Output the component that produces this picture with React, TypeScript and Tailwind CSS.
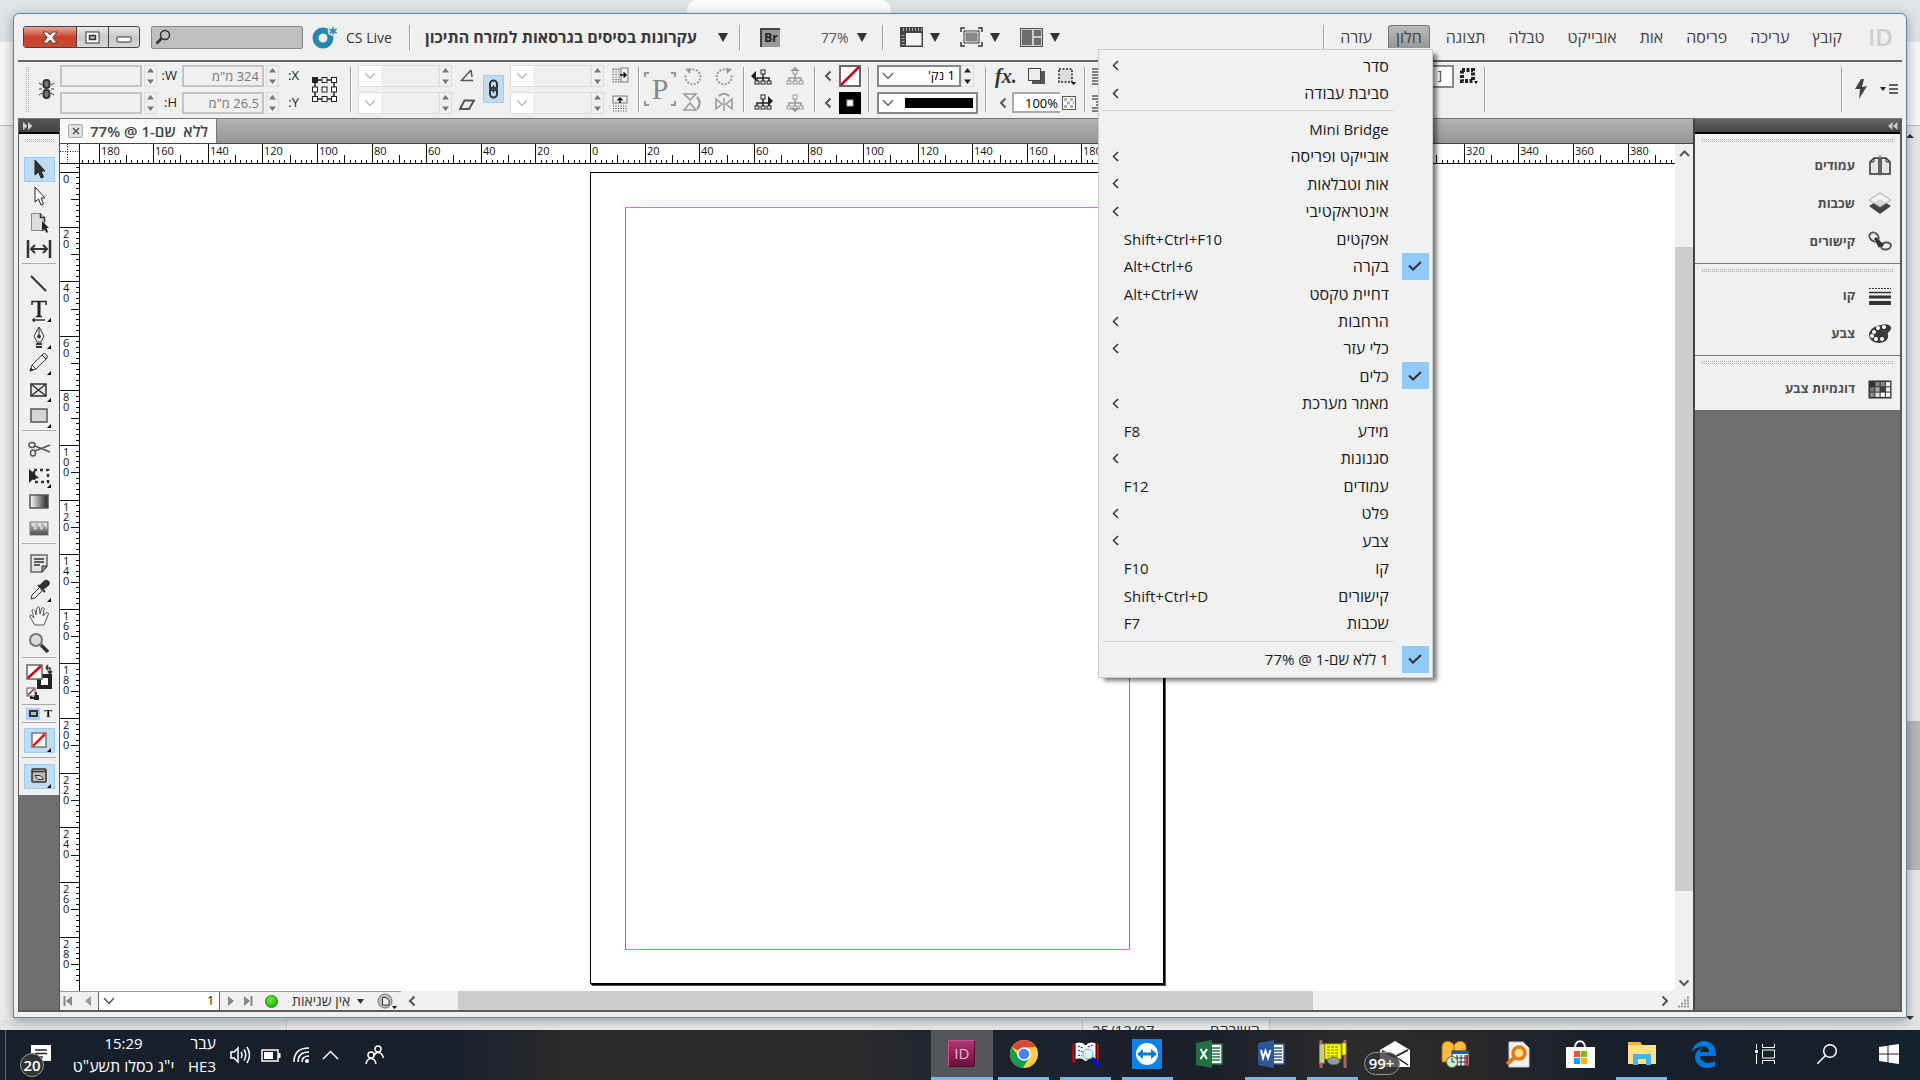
import React from "react";

type Kids = { children?: React.ReactNode };

const Svg = ({ w = 20, h = 20, children }: Kids & { w?: number; h?: number }) => (
  <svg width={w} height={h} viewBox={`0 0 ${w} ${h}`} fill="none" stroke="#333" className="shrink-0" aria-hidden="true">
    {children}
  </svg>
);

const Down = ({ c = "#333" }: { c?: string }) => (
  <Svg w={10} h={9}><path d="M0 0H10L5 9Z" fill={c} stroke="none" /></Svg>
);
const Chevron = ({ c = "#555" }: { c?: string }) => (
  <Svg w={8} h={12}><path d="M6.500 1.500L2 6L6.500 10.500" stroke={c} strokeWidth="2" /></Svg>
);
const ChevDown = ({ c = "#bbb" }: { c?: string }) => (
  <Svg w={12} h={8}><path d="M1 1L6 6.500L11 1" stroke={c} strokeWidth="1.500" /></Svg>
);
const Corner = () => <path d="M25 21V25H21Z" fill="#000" stroke="none" />;

const Rule = ({ className = "" }: { className?: string }) => (
  <div className={`w-px h-[45px] bg-[#a0a0a0] border-r border-white box-content shrink-0 ${className}`} />
);

/* ---------- title bar ---------- */

const menus = ["קובץ", "עריכה", "פריסה", "אות", "אובייקט", "טבלה", "תצוגה", "חלון", "עזרה"];

type Row = { t: string; k?: string; on?: boolean; latin?: boolean };
const topRows: Row[] = [{ t: "סדר" }, { t: "סביבת עבודה" }];
const midRows: Row[] = [
  { t: "Mini Bridge", k: " ", latin: true },
  { t: "אובייקט ופריסה" },
  { t: "אות וטבלאות" },
  { t: "אינטראקטיבי" },
  { t: "אפקטים", k: "Shift+Ctrl+F10" },
  { t: "בקרה", k: "Alt+Ctrl+6", on: true },
  { t: "דחיית טקסט", k: "Alt+Ctrl+W" },
  { t: "הרחבות" },
  { t: "כלי עזר" },
  { t: "כלים", k: " ", on: true },
  { t: "מאמר מערכת" },
  { t: "מידע", k: "F8" },
  { t: "סגנונות" },
  { t: "עמודים", k: "F12" },
  { t: "פלט" },
  { t: "צבע" },
  { t: "קו", k: "F10" },
  { t: "קישורים", k: "Shift+Ctrl+D" },
  { t: "שכבות", k: "F7" },
];

const MenuRow = ({ t, k, on, latin }: Row) => (
  <button role="menuitem" className="flex flex-1 w-full items-center pr-[3px] leading-5 text-[#1a1a1a]">
    <span className={`flex h-[27px] w-[27px] items-center justify-center ${on ? "bg-[#91c9f7]" : ""}`}>
      {on && <Svg w={14} h={10}><path d="M1 4.500L5 8.500L13 1" strokeWidth="2" /></Svg>}
    </span>
    <span className={`mr-[13px] ${latin ? "text-[15px]" : "text-[16px]"}`}>{t}</span>
    {k ? (
      <span dir="ltr" className="mr-auto ml-[25px] text-[15px]">{k}</span>
    ) : (
      <span className="mr-auto ml-[13px]"><Svg w={7} h={11}><path d="M6 1L1.500 5.500L6 10" strokeWidth="1.500" /></Svg></span>
    )}
  </button>
);

const WindowMenu = () => (
  <div role="menu" className="absolute right-[-3px] top-full z-20 flex h-[629px] w-[335px] flex-col border border-[#ccc] bg-[#f1f1f1] pt-[2px] pb-1 shadow-[5px_4px_4px_-1px_rgba(0,0,0,0.5)]">
    <div className="flex h-[55px] flex-col">{topRows.map((r) => <MenuRow key={r.t} {...r} />)}</div>
    <hr className="mr-[38px] ml-[3px] mt-[3px] mb-1 border-[#d9d9d9]" />
    <div className="flex h-[522px] flex-col">{midRows.map((r) => <MenuRow key={r.t} {...r} />)}</div>
    <hr className="mr-[38px] ml-[3px] mt-1 mb-[3px] border-[#d9d9d9]" />
    <div className="flex h-[28px] flex-col"><MenuRow t="1 ללא שם-1 @ 77%" k=" " on latin /></div>
  </div>
);

const TitleBar = () => (
  <header className="flex h-[46px] items-center pl-[5px] pr-[10px]">
    <div className="flex h-[22px] overflow-hidden rounded-[3px] border border-[#444] bg-gradient-to-b from-[#e8e8e8] via-[#c9c9c9] to-[#d8d8d8]">
      <button aria-label="סגור" className="flex w-[52px] items-center justify-center bg-gradient-to-b from-[#e5a59b] via-[#c9432f] to-[#c94a33]">
        <Svg w={16} h={13}><path d="M1 1H5.500L8 4L10.500 1H15L10.800 6.500L15 12H10.500L8 9L5.500 12H1L5.200 6.500Z" fill="#fff" stroke="#444" /></Svg>
      </button>
      <button aria-label="הגדל" className="flex w-[32px] items-center justify-center border-l border-[#444]">
        <Svg w={15} h={13}><rect x="1" y="1" width="13" height="11" fill="#fff" /><rect x="4.500" y="4.500" width="6" height="4" fill="#bbb" strokeWidth="1.500" /></Svg>
      </button>
      <button aria-label="מזער" className="flex w-[31px] items-center justify-center border-l border-[#444] pt-1">
        <Svg w={16} h={7}><rect x="1" y="1" width="14" height="5" fill="#fff" rx="1" /></Svg>
      </button>
    </div>
    <label className="ml-[11px] flex h-[23px] w-[152px] items-center rounded-[2px] border border-[#888] bg-[#bfbfbf] pl-[3px]">
      <Svg w={16} h={16}><circle cx="10" cy="6" r="4.500" strokeWidth="1.500" /><path d="M6.500 9.500L1.500 14.500" strokeWidth="2.500" /></Svg>
      <input aria-label="חיפוש" className="min-w-0 flex-1 bg-transparent outline-none" />
    </label>
    <button className="ml-[9px] flex items-center gap-2 text-[#333]">
      <Svg w={26} h={24}>
        <circle cx="11" cy="13" r="7.500" stroke="#2786ae" strokeWidth="6" />
        <path d="M21 1V11M16.500 3.500L25.500 8.500M25.500 3.500L16.500 8.500" stroke="#f0f0f0" strokeWidth="4" />
        <path d="M21 2V10M17.500 4L24.500 8M24.500 4L17.500 8" stroke="#2786ae" strokeWidth="1.500" />
      </Svg>
      <span className="w-[45px] whitespace-nowrap text-[14px]">CS Live</span>
    </button>
    <Rule className="ml-[18px] h-[25px]!" />
    <button className="ml-[14px] flex w-[303px] items-center justify-between whitespace-nowrap">
      <span dir="rtl" className="text-[16px] font-bold text-[#3a3a3a]">עקרונות בסיסים בגרסאות למזרח התיכון</span>
      <Down />
    </button>
    <Rule className="ml-[11px] h-[25px]!" />
    <button aria-label="Bridge" className="ml-[19px] flex h-[19px] w-[20px] items-center justify-center border-t-2 border-l-2 border-[#444] bg-[#999] text-[12px] font-bold leading-none text-[#222]">Br</button>
    <button className="ml-[41px] flex items-center gap-[9px] text-[14px] text-[#555]"><span className="w-[27px]">77%</span><Down /></button>
    <Rule className="ml-[15px] h-[25px]!" />
    <button aria-label="אפשרויות תצוגה" className="ml-4 flex items-center gap-[7px]">
      <Svg w={23} h={20}><rect width="23" height="20" fill="#444" stroke="none" /><rect x="6" y="6" width="15.500" height="12.500" fill="#f4f4f4" stroke="none" /><path d="M3 2.500H22M3 8V20" stroke="#aaa" strokeWidth="3" strokeDasharray="1 2" /></Svg>
      <Down />
    </button>
    <button aria-label="מצב מסך" className="ml-[20px] flex items-center gap-[7px]">
      <Svg w={23} h={20}><path d="M1 5V1H5M18 1H22V5M22 15V19H18M5 19H1V15" strokeWidth="1.500" /><rect x="4" y="4" width="15" height="12" fill="#888" /><path d="M5 5h13v10H5z" stroke="#ddd" /></Svg>
      <Down />
    </button>
    <button aria-label="סידור מסמכים" className="ml-[20px] flex items-center gap-[7px]">
      <Svg w={23} h={19}><rect x=".5" y=".5" width="22" height="18" fill="#ccc" stroke="#555" /><rect x="2" y="2" width="10" height="15" fill="#6c6c6c" stroke="none" /><rect x="14" y="2" width="7" height="6" fill="#6c6c6c" stroke="none" /><rect x="14" y="10" width="7" height="7" fill="#6c6c6c" stroke="none" /></Svg>
      <Down />
    </button>
    <Rule className="ml-auto h-[25px]!" />
    <nav dir="rtl" className="ml-2 flex h-[46px] items-start gap-[9px] pt-[11px]">
      {menus.map((m, i) => (
        <div key={m} className="relative">
          <button className={`h-[23px] rounded-t-[3px] px-[7px] text-[16px] leading-[23px] whitespace-nowrap text-[#444] ${i === 7 ? "border border-b-0 border-[#777] bg-gradient-to-b from-[#bbb] to-[#979797] leading-[22px]" : ""}`}>{m}</button>
          {i === 7 && <WindowMenu />}
        </div>
      ))}
    </nav>
    <span className="ml-[19px] w-[24px] text-[24px] font-semibold leading-none text-[#cfcfcf]">ID</span>
  </header>
);

/* ---------- control bar ---------- */

const Spin = ({ c = "#777" }: { c?: string }) => (
  <button aria-label="שינוי ערך" className="flex h-[22px] w-[13px] shrink-0 items-center justify-center border border-[#ddd]">
    <Svg w={7} h={18}><path d="M0 5.500L3.500 1L7 5.500ZM0 12.500L3.500 17L7 12.500Z" fill={c} stroke="none" /></Svg>
  </button>
);
const Field = ({ v, l }: { v: string; l: string }) => (
  <label dir="rtl" className="flex h-[22px] items-center text-[13px] text-[#222]">
    <span className="ml-[4px] w-[16px] text-right">{l}</span>
    <Spin />
    <input defaultValue={v} className="mr-[2px] h-[22px] w-[82px] border-2 border-[#c4c4c8] px-[3px] text-[13px] text-[#777]" />
  </label>
);
const Combo = ({ l }: { l: string }) => (
  <div className="flex">
    <button aria-label={l} className="flex h-[22px] w-[81px] border border-r-0 border-[#ddd]">
      <span className="flex h-full w-[22px] items-center justify-center bg-white"><ChevDown /></span>
    </button>
    <Spin />
  </div>
);
const Pair = ({ children, className = "" }: Kids & { className?: string }) => (
  <div className={`flex h-[49px] shrink-0 flex-col items-center justify-between ${className}`}>{children}</div>
);
const Rot = ({ flip }: { flip?: boolean }) => (
  <Svg w={19} h={20}>
    <g transform={flip ? "translate(19 0) scale(-1 1)" : ""}>
      <path d="M6 3.500A7.500 7.500 0 1 1 3 7" stroke="#999" strokeWidth="2" strokeDasharray="2 1.500" /><path d="M2 2L8 1L7 7Z" fill="#999" stroke="none" />
    </g>
  </Svg>
);
const Tree = ({ c, a }: { c: string; a: string }) => (
  <Svg w={22} h={20}><path d="M12 7V11M6 14V11H18V14M12 11V14" stroke={c} strokeWidth="1.500" /><rect x="10" y="3" width="4" height="4" stroke={c} /><rect x="4" y="14" width="4" height="3" stroke={c} /><rect x="10" y="14" width="4" height="3" stroke={c} /><rect x="16" y="14" width="4" height="3" stroke={c} /><path d={a} fill={c} stroke="none" /></Svg>
);

const refPoints = [0, 1, 2, 3, 4, 5, 6, 7, 8];

const ControlBar = () => (
  <section aria-label="בקרה" className="flex h-[59px] items-center border-b border-[#777] border-t-2 border-t-[#666] bg-[#f0f0f0] pl-[7px] pr-1 pb-[2px]">
    <Grip className="h-[45px] w-[4px]" />
    <div className="ml-[9px] w-[18px]">
      <Svg w={17} h={20}><path d="M1 4L4 6M1 10H4M1 16L4 14M16 4L13 6M16 10H13M16 16L13 14" /><rect x="5.500" y="1" width="6" height="8" rx="3" fill="#777" strokeWidth="2" /><rect x="5.500" y="11" width="6" height="8" rx="3" fill="#777" strokeWidth="2" /></Svg>
    </div>
    <Pair className="ml-[4px]"><Field l="W:" v="" /><Field l="H:" v="" /></Pair>
    <Pair className="ml-[5px]"><Field l="X:" v={'324 מ"מ'} /><Field l="Y:" v={'26.5 מ"מ'} /></Pair>
    <div className="ml-[13px]">
      <Svg w={25} h={25}>
        <rect x="3" y="3" width="19" height="19" strokeWidth="1.500" stroke="#222" />
        {refPoints.map((i) => <rect key={i} x={(i % 3) * 9.500 + 0.500} y={Math.floor(i / 3) * 9.500 + 0.500} width="5" height="5" stroke="#222" fill={i === 0 ? "#222" : "#fff"} />)}
      </Svg>
    </div>
    <Rule className="ml-[13px]" />
    <Pair className="ml-[6px]"><Combo l="קנה מידה X" /><Combo l="קנה מידה Y" /></Pair>
    <Pair className="ml-[7px] py-[3px]">
      <Svg w={14} h={14}><path d="M11 2L1.500 12.500H13M11 2L12 9" stroke="#555" strokeWidth="1.500" /></Svg>
      <Svg w={16} h={12}><path d="M5.500 1.500H15L10 10H1Z" stroke="#555" strokeWidth="2" /></Svg>
    </Pair>
    <button aria-label="נעל יחס" className="ml-[8px] flex h-[28px] w-[21px] items-center justify-center border border-[#9bcdf5] bg-[#c0dcf2]">
      <Svg w={11} h={20}><rect x="2" y="1.500" width="7" height="10" rx="3.500" strokeWidth="2" /><rect x="2" y="8.500" width="7" height="10" rx="3.500" strokeWidth="2" /><path d="M5.500 6V14" /></Svg>
    </button>
    <Pair className="ml-[6px]"><Combo l="סיבוב" /><Combo l="הטיה" /></Pair>
    <Pair className="ml-[8px] py-[2px]">
      <Svg w={17} h={17}><path d="M1 2H9M1 15H9M1 2V15M4 2V15M7 2V15" strokeDasharray="1 1.500" /><rect x="9" y="1" width="7" height="14" stroke="#777" /><path d="M8 8H14M11.500 5.500L14 8L11.500 10.500" stroke="#111" strokeWidth="1.500" /></Svg>
      <Svg w={17} h={17}><rect x="1" y="1" width="14" height="7" stroke="#777" /><path d="M1 11H15M1 13.500H15M1 16H15" strokeDasharray="1 1.500" /><path d="M8 8V3M5.500 5.500L8 3L10.500 5.500" stroke="#111" strokeWidth="1.500" /></Svg>
    </Pair>
    <Rule className="ml-[9px]" />
    <div className="ml-1 flex h-[34px] w-[32px] items-center justify-center bg-[linear-gradient(#999,#999),linear-gradient(#999,#999),linear-gradient(#999,#999),linear-gradient(#999,#999),linear-gradient(#999,#999),linear-gradient(#999,#999),linear-gradient(#999,#999),linear-gradient(#999,#999)] bg-[length:5px_2px,5px_2px,5px_2px,5px_2px,2px_5px,2px_5px,2px_5px,2px_5px] bg-[position:0_0,100%_0,0_100%,100%_100%,0_0,100%_0,0_100%,100%_100%] bg-no-repeat font-['Liberation_Serif'] text-[30px] leading-none text-[#888]">P</div>
    <Pair className="ml-[6px] py-[2px]"><Rot /><Svg w={20} h={20}><path d="M2 2H14L8 8ZM2 18H14L8 11Z" stroke="#999" strokeWidth="1.500" /><path d="M15 5C19 9 18 14 15 17" stroke="#999" strokeWidth="2" /></Svg></Pair>
    <Pair className="ml-[12px] py-[2px]"><Rot flip /><Svg w={20} h={20}><path d="M2 7V17L8 12ZM18 7V17L12 12ZM10 6V19" stroke="#999" strokeWidth="1.500" /><path d="M5 4C8 1 12 1 15 4" stroke="#999" strokeWidth="2" /></Svg></Pair>
    <Rule className="ml-[9px]" />
    <Pair className="ml-[6px] py-[2px]"><Tree c="#222" a="M0 9L5 4V14Z" /><Tree c="#222" a="M22 9L17 4V14Z" /></Pair>
    <Pair className="ml-[10px] py-[2px]"><Tree c="#999" a="M7 4L12 0L17 4Z" /><Tree c="#999" a="M7 16L12 20L17 16Z" /></Pair>
    <Rule className="ml-[9px]" />
    <Pair className="ml-[8px] py-[5px]"><Chevron /><Chevron /></Pair>
    <Pair className="ml-[7px]">
      <Svg w={22} h={22}><rect x="1" y="1" width="20" height="20" fill="#fff" stroke="#666" strokeWidth="2" /><path d="M2 20L20 2" stroke="#d0021b" strokeWidth="2.500" /></Svg>
      <Svg w={22} h={22}><rect width="22" height="22" fill="#000" stroke="none" /><rect x="8" y="8" width="6" height="6" fill="#fff" stroke="#aaa" /></Svg>
    </Pair>
    <Rule className="ml-[7px]" />
    <Pair className="ml-[7px] items-start!">
      <div className="flex">
        <label className="flex h-[22px] w-[84px] items-center border-2 border-[#888] bg-white pl-[3px]">
          <ChevDown c="#666" />
          <input dir="rtl" aria-label="עובי קו" defaultValue="1 נק'" className="min-w-0 flex-1 px-1 text-[13px]" />
        </label>
        <Spin c="#222" />
      </div>
      <button aria-label="סוג קו" className="flex h-[22px] w-[101px] items-center justify-between border-2 border-[#888] bg-white px-[3px]">
        <ChevDown c="#666" /><span className="h-[10px] w-[68px] bg-black" />
      </button>
    </Pair>
    <Rule className="ml-[7px]" />
    <Pair className="ml-[8px] items-stretch!">
      <div className="flex h-[22px] items-center justify-between">
        <span className="font-['Liberation_Serif'] text-[20px] font-bold italic leading-none text-[#333]">fx.</span>
        <Svg w={19} h={18}><rect x="5" y="4" width="13" height="13" fill="#555" stroke="none" /><rect x="1.500" y="1.500" width="12" height="12" fill="#eee" stroke="#444" /></Svg>
        <Svg w={19} h={18}><rect x="2" y="2" width="13" height="13" stroke="#555" strokeWidth="2" strokeDasharray="2 1.500" fill="#ddd" /><path d="M14 15H19L16.500 18Z" fill="#000" stroke="none" /></Svg>
      </div>
      <div className="flex h-[22px] items-center">
        <span className="ml-[4px] mr-[5px]"><Chevron /></span>
        <input aria-label="אטימות" defaultValue="100%" className="h-[21px] w-[48px] border-2 border-r-0 border-[#aaa] bg-white pr-[2px] text-right text-[13px]" />
        <span className="ml-[2px]"><Svg w={14} h={14}><rect x=".5" y=".5" width="13" height="13" fill="#fff" stroke="#555" /><path d="M2 3.500H12M5 7H12M2 10.500H12" stroke="#aaa" strokeWidth="3" strokeDasharray="3 3" /></Svg></span>
      </div>
    </Pair>
    <Rule className="ml-[8px]" />
    <Pair className="ml-[6px] py-[2px]">
      <Svg w={16} h={18}><path d="M0 2H16M0 5H16M0 8H16M0 11H16M0 14H16M0 17H16" stroke="#111" /></Svg>
      <Svg w={16} h={18}><path d="M0 2H16M0 5H16M4 8H16M4 11H16M0 14H16M0 17H16" stroke="#111" /></Svg>
    </Pair>
    <div className="ml-[236px] flex h-[49px] items-start gap-[5px]">
      <button className="flex h-[23px] w-[110px] items-center justify-end border-2 border-[#888] bg-white px-[10px] text-[13px] text-[#333]"><span>]</span></button>
      <Svg w={19} h={20}><rect x="3" y="5" width="11" height="11" strokeWidth="4" strokeDasharray="3 1.500" stroke="#222" /><path d="M15 16H19L17 19Z" fill="#000" stroke="none" /></Svg>
    </div>
    <Rule className="ml-[6px]" />
    <Rule className="ml-auto" />
    <button aria-label="החלה מהירה" className="ml-[11px]"><Svg w={14} h={20}><path d="M7 0L1 10L6 10L5 20L13 7L8 8L10 0Z" fill="#444" stroke="none" /></Svg></button>
    <button aria-label="תפריט לוח" className="ml-[12px]"><Svg w={18} h={12}><path d="M0 4H6L3 8Z" fill="#222" stroke="none" /><path d="M9 2H18M9 6H18M9 10H18" stroke="#333" strokeWidth="1.500" /></Svg></button>
  </section>
);

function Grip({ className = "" }: { className?: string }) {
  return <div className={`shrink-0 bg-[conic-gradient(#b0b0b0_25%,#eee_0)] bg-[length:2px_2px] ${className}`} />;
}

/* ---------- tool box ---------- */

const Arrow = ({ f }: { f: string }) => <path d="M9 4V19L12.500 16L15 22L17.500 21L15 15H19Z" fill={f} stroke="#222" />;
const Tool = ({ l, on, children, corner }: Kids & { l: string; on?: boolean; corner?: boolean }) => (
  <button aria-label={l} className={`flex h-[25px] w-[31px] shrink-0 items-center justify-center border ${on ? "border-[#9bcdf5] bg-[#c0dcf2]" : "border-transparent"}`}>
    <Svg w={26} h={26}>{children}{corner && <Corner />}</Svg>
  </button>
);
const Group = ({ className = "", children }: Kids & { className?: string }) => (
  <div className={`mx-[3px] flex flex-col items-center justify-evenly border-b border-[#aaa] ${className}`}>{children}</div>
);

const Toolbox = () => (
  <aside aria-label="כלים" className="flex w-[41px] shrink-0 flex-col border-r border-[#555] bg-[#6f6f6f]">
    <div className="flex h-[15px] items-center border-b-2 border-black bg-gradient-to-b from-[#555] to-[#444] pl-[4px]"><Svg w={10} h={8}><path d="M0 0L4.500 4L0 8ZM5 0L9.500 4L5 8Z" fill="#ccc" stroke="none" /></Svg></div>
    <div className="bg-[#f0f0f0] pb-px">
      <div className="flex h-[18px] items-start justify-center pt-[5px]"><Grip className="h-[4px] w-[30px]" /></div>
      <Group className="h-[112px] pt-[3px]">
        <Tool l="בחירה" on><Arrow f="#333" /></Tool>
        <Tool l="בחירה ישירה"><Arrow f="#fff" /></Tool>
        <Tool l="עמוד"><path d="M5.500 4.500H14.500L18.500 8.500V21.500H5.500Z" fill="#ddd" stroke="#888" /><path d="M14.500 4.500V8.500H18.500V13" stroke="#333" strokeWidth="1.500" /><path d="M16 12V22L18.500 20L20.500 24L22 23L20.500 19H23Z" fill="#222" stroke="none" /></Tool>
        <Tool l="רווח"><path d="M2 4V22M24 4V22" strokeWidth="2.500" /><path d="M5 13H21M9 9L5 13L9 17M17 9L21 13L17 17" strokeWidth="2" /></Tool>
      </Group>
      <Group className="h-[167px] pt-[6px]">
        <Tool l="קו"><path d="M5 5L20 20" strokeWidth="2" /></Tool>
        <Tool l="טקסט" corner><path d="M6 8V4.500H20V8" strokeWidth="1.500" stroke="#222" /><path d="M13 4V19" strokeWidth="3" stroke="#222" /><path d="M10 19.500H16" strokeWidth="1.500" stroke="#222" /><path d="M6 23H19M8 21V25" strokeWidth="1.500" /></Tool>
        <Tool l="עט" corner><path d="M13 3L18 12L15 18H11L8 12ZM13 4V12" fill="#eee" /><circle cx="13" cy="12.500" r="1.500" fill="#333" /><path d="M10 20H16M10 23H16" strokeWidth="2" /></Tool>
        <Tool l="עיפרון" corner><path d="M4 21L6 15L17 4C19 3 22 5 21 8L10 19Z" fill="#eee" /><path d="M4 21L7 20L5 18ZM6 15L10 19M16 5L20 9" fill="#333" /></Tool>
        <Tool l="מסגרת מלבנית" corner><rect x="5" y="7" width="15" height="12" fill="#e5e5e5" strokeWidth="1.500" /><path d="M5 7L20 19M20 7L5 19" strokeWidth="1.500" /></Tool>
        <Tool l="מלבן" corner><rect x="5" y="6" width="16" height="13" fill="#d5d5d5" strokeWidth="1.500" stroke="#555" /></Tool>
      </Group>
      <Group className="h-[113px] pt-[4px]">
        <Tool l="מספריים"><ellipse cx="6" cy="9" rx="3" ry="2.500" strokeWidth="1.500" stroke="#555" /><ellipse cx="7" cy="17" rx="2.500" ry="3" strokeWidth="1.500" stroke="#555" /><path d="M9 10L24 16M9 15L24 9" strokeWidth="1.500" stroke="#555" /></Tool>
        <Tool l="טרנספורמציה" corner><rect x="8" y="7" width="14" height="12" strokeWidth="2.500" strokeDasharray="3 3" /><path d="M3 6V20L7 16L13 15Z" fill="#222" stroke="none" /></Tool>
        <Tool l="גרדיאנט"><defs><linearGradient id="gr"><stop stopColor="#fff" /><stop offset="1" stopColor="#222" /></linearGradient></defs><rect x="4" y="6" width="18" height="13" fill="url(#gr)" stroke="#555" strokeWidth="1.500" /></Tool>
        <Tool l="טשטוש גרדיאנט"><defs><linearGradient id="gv" x2="0" y2="1"><stop stopColor="#ddd" /><stop offset="1" stopColor="#444" /></linearGradient></defs><rect x="4" y="6" width="18" height="13" fill="url(#gv)" stroke="#777" /><path d="M6 9H21M8 12H21" stroke="#fff" strokeOpacity=".5" strokeWidth="3" strokeDasharray="3 3" /></Tool>
      </Group>
      <Group className="h-[114px] pt-[5px]">
        <Tool l="הערה"><path d="M5 5H21V16L16 22H5Z" fill="#e5e5e5" stroke="#666" strokeWidth="1.500" /><path d="M8 9H18M8 12H18M8 15H14" strokeWidth="1.500" /><path d="M21 16H16V22Z" fill="#999" /></Tool>
        <Tool l="טפטפת" corner><path d="M5 22L6 18L14 10L17 13L9 21Z" fill="#eee" /><path d="M12 8L19 15M14 9L19 4C22 3 24 6 22 8L17 12Z" fill="#333" strokeWidth="2" /></Tool>
        <Tool l="יד"><path d="M9 22L4 14C3 12 5 11 7 14L8 15L6 8C6 6 8 6 9 8L10 12L11 4.500C12 3 13.500 4 13.500 5L14 11L16 5C17 4 19 5 18 7L17 13L20 10C22 9 23 10 22 12L18 22Z" fill="#f5f5f5" stroke="#555" /></Tool>
        <Tool l="זום"><circle cx="10" cy="10" r="6" fill="#ddd" stroke="#777" strokeWidth="2" /><path d="M15 15L22 22" strokeWidth="3.500" /></Tool>
      </Group>
      <Group className="h-[47px]">
        <button aria-label="מילוי וקו"><Svg w={28} h={38}>
          <rect x="14" y="14" width="11" height="11" stroke="#222" strokeWidth="4" fill="#fff" />
          <rect x="2" y="3" width="15" height="14" fill="#fff" stroke="#666" strokeWidth="1.500" /><path d="M3 16L16 4" stroke="#d0021b" strokeWidth="2.500" />
          <path d="M21 6H25V11M21 6L23 3M21 6L23 8M23 9L25 12L27 9" strokeWidth="1.500" />
          <path d="M6 31H11V36H6ZM9 34H13V37H9" fill="#fff" stroke="#222" strokeWidth="2" /><rect x="2" y="26" width="8" height="8" fill="#fff" stroke="#555" /><path d="M3 33L9 27" stroke="#d0021b" strokeWidth="1.500" />
        </Svg></button>
      </Group>
      <Group className="h-[18px] flex-row!">
        <button aria-label="מיכל" className="flex h-[12px] w-[14px] items-center justify-center bg-[#a9d1f5]"><Svg w={9} h={7}><rect x="1" y="1" width="7" height="5" fill="#bbb" strokeWidth="2" /></Svg></button>
        <button aria-label="טקסט" className="font-['Liberation_Serif'] text-[11px] font-bold leading-none">T</button>
      </Group>
      <Group className="h-[35px]">
        <Tool l="ללא צבע" on corner><rect x="6" y="6" width="14" height="14" fill="#fff" stroke="#777" strokeWidth="1.500" /><path d="M7 19L19 7" stroke="#f11" strokeWidth="2.500" /></Tool>
      </Group>
      <Group className="h-[36px] border-b-0!">
        <Tool l="מצב תצוגה" on corner><rect x="6" y="6" width="14" height="13" rx="1" fill="#bbb" strokeWidth="1.500" /><path d="M6 8.500H20" strokeWidth="1.500" /><path d="M9 12.500H14L17 15V16.500H12Z" fill="#ddd" /></Tool>
      </Group>
    </div>
  </aside>
);

/* ---------- document ---------- */

const UNIT = 2.7305;
const hMarks = Array.from({ length: 29 }, (_, i) => (i - 9) * 20);
const vMarks = Array.from({ length: 15 }, (_, i) => i * 20);
const hSmall = Array.from({ length: 293 }, (_, i) => (i - 93) * 2);
const vSmall = Array.from({ length: 151 }, (_, i) => (i - 2) * 2);

const TopRuler = () => (
  <svg className="h-[20px] min-w-0 flex-1 bg-white" aria-hidden="true">
    {hSmall.map((n) => {
      const x = Math.round(510 + n * UNIT) + 0.5;
      const len = n % 20 === 0 ? 20 : n % 10 === 0 ? 8 : 3;
      return <path key={n} d={`M${x} ${19 - len}V19`} stroke="#111" />;
    })}
    <path d="M0 19.500H1610" stroke="#111" />
    {hMarks.map((n) => <text key={n} x={Math.round(510 + n * UNIT) + 2} y="11" fontSize="11" fill="#111">{Math.abs(n)}</text>)}
  </svg>
);
const SideRuler = () => (
  <svg className="h-[827px] w-[20px] shrink-0 bg-white" aria-hidden="true">
    {vSmall.map((n) => {
      const y = Math.round(8 + n * UNIT) + 0.5;
      const len = n % 20 === 0 ? 20 : n % 10 === 0 ? 8 : 3;
      return <path key={n} d={`M${19 - len} ${y}H19`} stroke="#111" />;
    })}
    <path d="M19.500 0V828" stroke="#111" />
    {vMarks.flatMap((n) => String(n).split("").map((d, i) => (
      <text key={`${n}-${i}`} x="3" y={Math.round(8 + n * UNIT) + 11 + i * 10} fontSize="11" fill="#111">{d}</text>
    )))}
  </svg>
);

const StatusBar = () => (
  <footer className="flex h-[19px] items-center bg-[#f0f0f0]">
    <div className="flex h-full w-[341px] shrink-0 items-center border-t border-[#999]">
      <button aria-label="עמוד ראשון" className="w-[21px] pl-[3px]"><Svg w={9} h={10}><path d="M1.500 0V10" stroke="#888" strokeWidth="2" /><path d="M9 0V10L3 5Z" fill="#888" stroke="none" /></Svg></button>
      <button aria-label="עמוד קודם" className="w-[17px] pl-[4px]"><Svg w={6} h={10}><path d="M6 0V10L0 5Z" fill="#999" stroke="none" /></Svg></button>
      <button aria-label="עמוד" className="flex h-full w-[122px] items-center justify-between border-x border-[#666] bg-white px-[4px]"><ChevDown c="#555" /><span className="pr-px text-[12px]">1</span></button>
      <button aria-label="עמוד הבא" className="ml-[8px]"><Svg w={6} h={10}><path d="M0 0V10L6 5Z" fill="#888" stroke="none" /></Svg></button>
      <button aria-label="עמוד אחרון" className="ml-[10px]"><Svg w={9} h={10}><path d="M7.500 0V10" stroke="#888" strokeWidth="2" /><path d="M0 0V10L6 5Z" fill="#888" stroke="none" /></Svg></button>
      <span className="ml-[12px] h-[13px] w-[13px] rounded-full border border-[#0a8a00] bg-[radial-gradient(circle_at_40%_30%,#6bea3a,#18a800)]" />
      <button className="ml-[14px] flex items-center gap-[7px]"><span className="whitespace-nowrap text-[14px] leading-none text-[#333]">אין שגיאות</span><Svg w={7} h={5}><path d="M0 0H7L3.500 5Z" fill="#333" stroke="none" /></Svg></button>
      <button aria-label="פתח" className="ml-[13px]"><Svg w={20} h={17}><circle cx="8" cy="8" r="7" fill="#bbb" stroke="#777" /><path d="M5.500 4.500H9L12 7.500V12H5.500Z" fill="#eee" /><path d="M15 13H20L17.500 16Z" fill="#000" stroke="none" /></Svg></button>
    </div>
    <span className="ml-[7px]"><Chevron /></span>
    <div className="ml-[42px] h-full w-[855px] shrink bg-[#cdcdcd]" />
    <span className="ml-auto mr-[4px] rotate-180"><Chevron /></span>
    <Svg w={20} h={16}><path d="M5 13.500H17M8 10.500H17M11 7.500H17M14 4.500H17" stroke="#999" strokeWidth="2" strokeDasharray="2 1" /></Svg>
  </footer>
);

const DocumentArea = () => (
  <main className="flex min-w-0 flex-1 flex-col">
    <div className="flex h-[25px] border-b border-[#444] bg-gradient-to-b from-[#b3b3b3] to-[#959595]">
      <div className="flex w-[157px] items-center gap-[7px] border-r border-[#777] bg-gradient-to-b from-[#f7f7f7] to-[#fcfcfc] pl-[8px]">
        <button aria-label="סגור כרטיסייה" className="flex h-[14px] w-[15px] items-center justify-center rounded-[2px] border border-[#aaa] bg-[#e2e2e2]"><Svg w={8} h={8}><path d="M1 1L7 7M7 1L1 7" strokeWidth="1.500" stroke="#555" /></Svg></button>
        <span dir="rtl" className="whitespace-nowrap text-[15px] leading-5 font-semibold text-[#444]">ללא &nbsp;שם-1 @ 77%</span>
      </div>
    </div>
    <div className="flex">
      <div className="flex min-w-0 flex-1 flex-col">
        <div className="flex h-[20px]">
          <Svg w={20} h={20}><rect width="20" height="20" fill="#fff" stroke="none" /><path d="M0 7.500H19M7.500 0V19" stroke="#111" strokeDasharray="1 1.500" /><path d="M0 19.500H20M19.500 0V20" stroke="#111" /></Svg>
          <TopRuler />
        </div>
        <div className="flex">
          <SideRuler />
          <div className="relative h-[827px] min-w-0 flex-1 overflow-hidden bg-white">
            <div className="absolute left-[510px] top-[8px] h-[812px] w-[574px] border border-black bg-white shadow-[1px_1px_0_#000,2px_2px_0_#555]">
              <div className="ml-[34px] mt-[34px] h-[743px] w-[505px] border border-x-[#a855f7] border-y-[#f85af8]" />
            </div>
          </div>
        </div>
      </div>
      <div className="flex w-[18px] flex-col items-center bg-[#f0f0f0]">
        <span className="flex h-[18px] rotate-90 items-center pl-px"><Chevron /></span>
        <div className="mt-[85px] h-[644px] w-full bg-[#cdcdcd]" />
        <span className="mt-auto mb-px flex h-[14px] -rotate-90 items-center"><Chevron /></span>
      </div>
    </div>
    <StatusBar />
  </main>
);

/* ---------- side panels ---------- */

const PanelRow = ({ t, children }: Kids & { t: string }) => (
  <button dir="rtl" className="flex flex-1 items-center gap-[13px] pr-[8px] text-[13px] font-bold text-[#505050]"><Svg w={24} h={24}>{children}</Svg><span className="whitespace-nowrap">{t}</span></button>
);
const PanelGroup = ({ className = "", children }: Kids & { className?: string }) => (
  <section className={`flex flex-col border-b border-[#777] bg-[#f0f0f0] pt-[5px] ${className}`}>
    <Grip className="mx-[6px] mb-[4px] h-[4px]" />
    {children}
  </section>
);
const swatches = ["#333", "#888", "#888", "#eee", "#777", "#aaa", "#444", "#eee", "#888", "#ddd", "#fff", "#fff"];

const Panels = () => (
  <aside aria-label="לוחות" className="flex w-[209px] shrink-0 flex-col border-x-2 border-l-[#444] border-r-[#5c5c5c] bg-[#6f6f6f]">
    <div className="flex h-[15px] items-center justify-end border-b-2 border-black bg-gradient-to-b from-[#666] to-[#444] pr-[2px]"><Svg w={10} h={8}><path d="M4.500 0L0 4L4.500 8ZM9.500 0L5 4L9.500 8Z" fill="#ccc" stroke="none" /></Svg></div>
    <PanelGroup className="h-[130px] pb-[2px]">
      <PanelRow t="עמודים"><path d="M2 20V8L6 4H11V20ZM13 20V4H18L22 8V20Z" fill="#e5e5e5" strokeWidth="1.500" /><path d="M6 4V8H2M18 4V8H22" /><path d="M12 1V22" stroke="#666" /></PanelRow>
      <PanelRow t="שכבות"><path d="M1 14L12 7L23 14L12 22Z" fill="#444" stroke="none" /><path d="M12 1L23 8L12 15L1 8Z" fill="#f4f4f4" fillOpacity=".85" stroke="#aaa" /></PanelRow>
      <PanelRow t="קישורים"><ellipse cx="6" cy="7" rx="5" ry="4" transform="rotate(40 6 7)" strokeWidth="2" stroke="#555" /><ellipse cx="18" cy="16" rx="5" ry="3.500" transform="rotate(-10 18 16)" strokeWidth="2" stroke="#555" /><path d="M7 8L15 16M12 17L9 11" strokeWidth="3" /></PanelRow>
    </PanelGroup>
    <PanelGroup className="h-[92px] pb-[2px]">
      <PanelRow t="קו"><path d="M1 4.500H23" strokeDasharray="2 1" /><path d="M1 8.500H23" strokeWidth="1.500" /><path d="M1 13H23" strokeWidth="3" /><path d="M1 19H23" strokeWidth="4" /></PanelRow>
      <PanelRow t="צבע"><path d="M13 3C18 1 24 3 23 7C22 10 19 10 20 13C21 17 17 21 11 21C5 21 1 17 1 13C1 8 6 4 13 3Z" fill="#3a3a3a" stroke="none" />{[[6, 10], [10, 6], [16, 5], [4, 14], [8, 17], [14, 17]].map(([x, y]) => <circle key={`${x}-${y}`} cx={x} cy={y} r="2" fill="#fff" stroke="none" />)}</PanelRow>
    </PanelGroup>
    <PanelGroup className="h-[54px] border-b-0! pb-[2px]">
      <PanelRow t="דוגמיות צבע"><rect x="1" y="4" width="22" height="17" fill="#333" />{swatches.map((c, i) => <rect key={i} x={2 + (i % 4) * 5.300} y={5 + Math.floor(i / 4) * 5.300} width="4.300" height="4.300" fill={c} stroke="none" />)}</PanelRow>
    </PanelGroup>
  </aside>
);

/* ---------- taskbar ---------- */

const Office = ({ c, d }: { c: string; d: string }) => (
  <Svg w={28} h={28}><rect x="14" y="4" width="13" height="20" fill="#fff" stroke={c} strokeWidth="1.500" /><path d="M16 8H25M16 11H25M16 14H25M16 17H25M16 20H25" stroke={c} strokeWidth="1.500" /><path d="M1 3L17 0V28L1 25Z" fill={c} stroke="none" /><path d={d} stroke="#fff" strokeWidth="2" /></Svg>
);
const Quad = ({ x, y, s, g }: { x: number; y: number; s: number; g: number }) => (
  <g stroke="none"><rect x={x} y={y} width={s} height={s} fill="#f25022" /><rect x={x + s + g} y={y} width={s} height={s} fill="#7fba00" /><rect x={x} y={y + s + g} width={s} height={s} fill="#00a4ef" /><rect x={x + s + g} y={y + s + g} width={s} height={s} fill="#ffb900" /></g>
);

const apps: { n: string; open?: boolean; icon: React.ReactNode }[] = [
  { n: "InDesign", icon: <span className="flex h-[27px] w-[27px] items-center justify-center rounded-[2px] border border-[#d24a8a] border-r-[#5a0a35] border-b-[#5a0a35] bg-gradient-to-b from-[#b03572] to-[#6a1040] text-[15px] leading-none text-[#f5b5d5]">ID</span> },
  { n: "Chrome", open: true, icon: <Svg w={28} h={28}><g stroke="none"><circle cx="14" cy="14" r="14" fill="#fc4" /><path d="M14 14L1.900 7A14 14 0 0 1 26.100 7L14 7.500Z" fill="#db4437" /><path d="M1.900 7A14 14 0 0 0 13 28L19.500 17L8.500 17Z" fill="#0f9d58" /><circle cx="14" cy="14" r="6.800" fill="#fff" /><circle cx="14" cy="14" r="5.300" fill="#4285f4" /></g></Svg> },
  { n: "ספרייה", open: true, icon: <Svg w={30} h={28}><path d="M2 4H4V22H2ZM25 4H27V20H25Z" fill="#e00" stroke="#e00" /><path d="M4 3C8 1 12 2 14.500 5C17 2 21 1 25 3V20C21 18 17 19 14.500 22C12 19 8 18 4 20Z" fill="#fff" stroke="#000" /><path d="M7 6L12 8M7 10L12 12M7 15L11 16M17 7L22 5" stroke="#00f" strokeDasharray="2 1" /><circle cx="17" cy="14" r="5" fill="#cff" stroke="#999" /><path d="M21 18L28 26" stroke="#01c" strokeWidth="4" /></Svg> },
  { n: "TeamViewer", open: true, icon: <Svg w={30} h={30}><rect width="30" height="30" rx="1" fill="#0b83e8" stroke="none" /><circle cx="15" cy="15" r="11" fill="#fff" stroke="none" /><path d="M5 15L11 10V13.500H19V10L25 15L19 20V16.500H11V20Z" fill="#0b7bdc" stroke="none" /></Svg> },
  { n: "Excel", icon: <Office c="#207245" d="M5.500 9L12 19M12 9L5.500 19" /> },
  { n: "Word", open: true, icon: <Office c="#2b5797" d="M4 10L6 18L8.500 11L11 18L13.500 10" /> },
  { n: "מגילה", open: true, icon: <Svg w={30} h={30}><path d="M3 1V29M27 1V29" stroke="#a66" strokeWidth="3" /><rect x="1.500" y="5" width="5" height="19" fill="#cc8" stroke="#886" /><rect x="24" y="4" width="4" height="12" fill="#ff0" stroke="#886" /><rect x="7" y="5" width="16" height="15" fill="#ff0" stroke="#aa0" /><path d="M9 8H21M9 11H21M9 14H21M9 17H21" stroke="#660" strokeDasharray="3 1" /><path d="M9 22C11 17 20 17 22 22C21 27 11 27 9 22Z" fill="#999" stroke="#666" /></Svg> },
  { n: "דואר", icon: <span className="relative flex"><Svg w={30} h={26}><path d="M0 9L15 0L30 9V26H0Z" fill="#fff" stroke="none" /><path d="M2 10L15 16L28 9M16 16L28 24" stroke="#111" strokeWidth="1.500" /><path d="M2 10L15 16L28 9L15 15Z" fill="#222" /></Svg><span className="absolute top-[11px] left-[-16px] flex h-[23px] w-[36px] items-center justify-center rounded-full border border-[#999] bg-[#333]/80 text-[15px] font-semibold leading-none text-white">99+</span></span> },
  { n: "לוח זמנים", icon: <Svg w={30} h={28}><path d="M1 22V6C2 0 10 0 13 5C16 0 24 0 25 6V22Z" fill="#fb4" stroke="#a60" /><path d="M13 5V22" stroke="#a60" /><rect x="11" y="11" width="17" height="15" fill="#eee" stroke="#224" /><path d="M11 12.500H28" stroke="#25c" strokeWidth="3" /><path d="M12 18H27M12 22H27M16 15V26M20 15V26M24 15V26" stroke="#334" /><path d="M26 15V26" stroke="#c22" strokeWidth="2" /><circle cx="11" cy="22" r="5.500" fill="#cec" stroke="#565" /><path d="M11 18V22H14" /></Svg> },
  { n: "חיפוש קבצים", icon: <Svg w={26} h={28}><path d="M4 2H18L24 8V27H4Z" fill="#f2f2f2" stroke="#ccc" /><circle cx="14" cy="13" r="6" stroke="#e87a10" strokeWidth="3.500" fill="#fd9" /><path d="M9 18L2 24" stroke="#e87a10" strokeWidth="4" /></Svg> },
  { n: "Store", icon: <Svg w={30} h={30}><path d="M10 9C10 0 20 0 20 9" stroke="#fff" strokeWidth="2" /><rect x="1" y="8" width="29" height="21" fill="#fff" stroke="none" /><Quad x={9} y={12} s={6} g={1} /></Svg> },
  { n: "סייר הקבצים", open: true, icon: <Svg w={28} h={26}><path d="M0 1H12L14 4H28V23H0Z" fill="#ffe08a" stroke="none" /><path d="M0 1H12L14 4H0Z" fill="#f7b928" stroke="none" /><path d="M5 24V13H23V24H18V18H10V24Z" fill="#3fb5e8" stroke="none" /></Svg> },
  { n: "Edge", icon: <Svg w={26} h={28}><path d="M1 12C2 5 7 1 13 1C20 1 25 6 25 14V16H9C9 20 13 23 17 23C20 23 22 22 24 21V26C22 27 19 28 16 28C9 28 4 23 4 17C4 12 8 9 12 8C10 9 9 11 9 12H18C18 9 16 6.500 12 6.500C7 6.500 3 9 1 12Z" fill="#0078d7" stroke="none" /></Svg> },
  { n: "תצוגת משימות", icon: <Svg w={20} h={20}><path d="M1.500 0V5M1.500 10V20M7.500 0V3.500H19.500V0M7.500 20V16.500H19.500V20M7.500 6V14H19.500V6Z" stroke="#fff" /><rect y="6" width="3" height="3" fill="#fff" stroke="none" /></Svg> },
  { n: "חיפוש", icon: <Svg w={20} h={20}><circle cx="13" cy="7" r="6.300" stroke="#fff" strokeWidth="1.500" /><path d="M8.500 11.500L0 20" stroke="#fff" strokeWidth="1.500" /></Svg> },
  { n: "התחל", icon: <Svg w={20} h={20}><path d="M0 3L8.500 1.700V9.500H0ZM9.500 1.500L20 0V9.500H9.500ZM0 10.500H8.500V18.300L0 17ZM9.500 10.500H20V20L9.500 18.500Z" fill="#fff" stroke="none" /></Svg> },
];

const Taskbar = () => (
  <footer className="flex h-[50px] bg-[linear-gradient(90deg,#171f2b_0,#171f2b_23%,#2c2b2b_30%,#2b2b2c_44%,#1b222e_52%,#1b1f2a_63%,#2b2b2b_70%,#2a292a_76%,#171f2b_84%,#15212b_100%)] text-white">
    <div className="flex w-[931px] shrink-0 items-center">
      <div className="ml-[5px] h-full w-px bg-[#667]" />
      <button aria-label="20 הודעות" className="relative ml-[25px] flex">
        <Svg w={20} h={20}><path d="M0 0H20V16H9V20L5 16H0Z" fill="#fff" stroke="none" /><path d="M4 5H16M4 8.500H16M4 12H12" stroke="#222" strokeWidth="1.500" /></Svg>
        <span className="absolute top-[8px] left-[-11px] flex h-[24px] w-[24px] items-center justify-center rounded-full border border-[#999] bg-[#333] text-[15px] font-semibold leading-none">20</span>
      </button>
      <button className="ml-[15px] flex w-[115px] flex-col items-center leading-[23px] whitespace-nowrap"><span className="text-[15px]">15:29</span><span dir="rtl" className="text-[16px]">י"ג כסלו תשע"ט</span></button>
      <button className="ml-[5px] flex w-[30px] flex-col items-end leading-[23px] whitespace-nowrap"><span className="text-[16px]">עבר</span><span className="text-[15px]">HE3</span></button>
      <button aria-label="עוצמת קול" className="ml-[14px]"><Svg w={21} h={18}><path d="M1 6H4L8 2V16L4 12H1Z" stroke="#fff" strokeWidth="1.500" /><path d="M11 6Q13 9 11 12M14 3.500Q17.500 9 14 14.500M17 1Q22 9 17 17" stroke="#fff" strokeWidth="1.500" /></Svg></button>
      <button aria-label="סוללה" className="ml-[10px]"><Svg w={20} h={13}><rect x="1" y="1" width="16" height="11" stroke="#fff" strokeWidth="1.500" /><rect x="3" y="3" width="9" height="7" fill="#fff" stroke="none" /><path d="M18.500 4V9" stroke="#fff" strokeWidth="2" /></Svg></button>
      <button aria-label="רשת" className="ml-[12px]"><Svg w={17} h={18}><path d="M1 16Q1 2 16 2M5 16Q5 6 16 6M9 16Q9 10 16 10" stroke="#fff" strokeWidth="1.500" /><circle cx="14" cy="15" r="2" fill="#fff" stroke="none" /></Svg></button>
      <button aria-label="סמלים מוסתרים" className="ml-[12px]"><Svg w={17} h={10}><path d="M1 9L8.500 1.500L16 9" stroke="#fff" strokeWidth="1.500" /></Svg></button>
      <button aria-label="אנשים" className="ml-[26px]"><Svg w={20} h={20}><circle cx="6" cy="10" r="3" stroke="#fff" strokeWidth="1.500" /><path d="M1 19Q2 13.500 6 13.500Q10 13.500 11 19" stroke="#fff" strokeWidth="1.500" /><circle cx="13" cy="4" r="3" stroke="#fff" strokeWidth="1.500" /><path d="M9 11Q10 7.500 13 7.500Q17 7.500 18.500 13" stroke="#fff" strokeWidth="1.500" /></Svg></button>
    </div>
    <div className="flex min-w-0 flex-1">
      {apps.map((a, i) => (
        <button key={a.n} aria-label={a.n} className={`flex flex-1 flex-col items-center ${i === 0 ? "bg-[#555659]" : ""}`}>
          <span className="flex h-[47px] items-center justify-center">{a.icon}</span>
          {(a.open || i === 0) && <span className={`h-[3px] bg-[#76b9ed] ${i === 0 ? "w-full" : "w-[51px]"}`} />}
        </button>
      ))}
    </div>
  </footer>
);

/* ---------- page ---------- */

const Backdrop = () => (
  <div aria-hidden="true" className="absolute inset-0 flex flex-col overflow-hidden bg-[#ececec]">
    <div className="flex h-[42px] shrink-0 items-start bg-[#dfe4e7] pl-[687px]"><div className="h-[20px] w-[204px] rounded-t-[10px] bg-[#fafbfb]" /></div>
    <div className="h-[84px] shrink-0 border-b border-[#bbb] bg-[#f6f6f6]" />
    <div className="flex flex-1 justify-end">
      <div className="flex w-[20px] flex-col items-center bg-[#e6e6e6]">
        <span className="mt-[8px] h-0 w-0 border-x-4 border-b-4 border-x-transparent border-b-[#333]" />
        <div className="mt-[583px] h-[149px] w-full bg-[#b5b5b5]" />
        <span className="mt-[146px] h-0 w-0 border-x-4 border-t-4 border-x-transparent border-t-[#333]" />
      </div>
    </div>
    <div className="flex h-[12px] shrink-0 items-start bg-[#e3e4e4] pl-[286px]">
      <div className="h-full w-[796px] border-l border-[#ccc] bg-[#eaebea]" />
      <div className="flex h-full w-[188px] justify-between overflow-hidden border-x border-[#ccc] bg-[#f0f0f0] px-[9px] text-[15px] leading-[20px] text-[#333]"><span>25/12/07</span><span>השורהם</span></div>
    </div>
  </div>
);

export default function App() {
  return (
    <div className="flex min-h-screen w-full flex-col font-['Open_Sans','Noto_Sans','DejaVu_Sans',sans-serif]">
      <div className="relative flex-1 pb-[12px]">
        <Backdrop />
        <div className="relative mx-[13px] mt-[13px] flex flex-col rounded-t-[6px] border border-[#5d87a8] bg-[#f0f0f0] px-[4px] pb-[5px] shadow-[0_3px_12px_rgba(0,0,0,0.35)]">
          <TitleBar />
          <ControlBar />
          <div className="flex border-b-2 border-l border-[#5c5c5c]">
            <Toolbox />
            <DocumentArea />
            <Panels />
          </div>
        </div>
      </div>
      <Taskbar />
    </div>
  );
}
